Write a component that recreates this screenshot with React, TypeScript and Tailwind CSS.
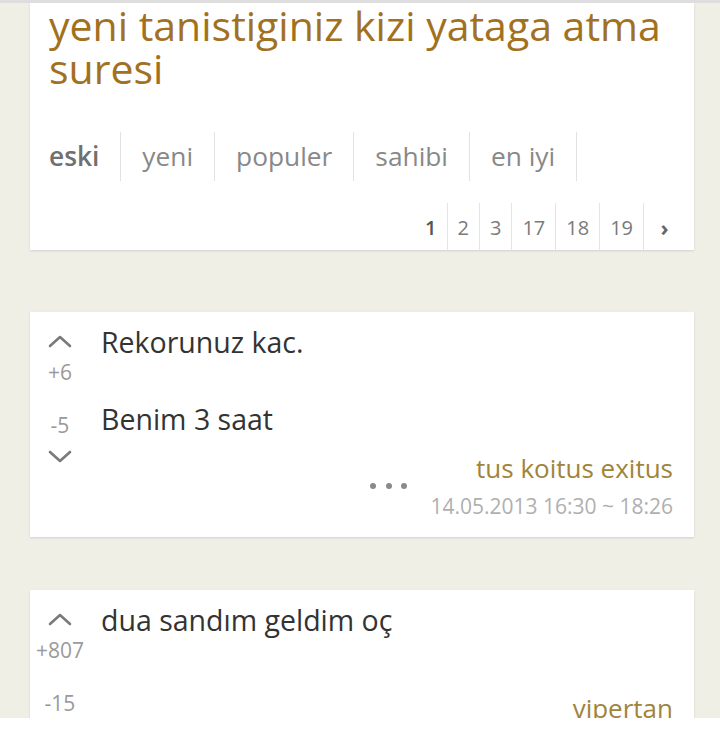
const tabs = ["eski", "yeni", "populer", "sahibi", "en iyi"];
const pages = ["1", "2", "3", "17", "18", "19"];

function Chevron({ down = false }: { down?: boolean }) {
  return (
    <svg width="24" height="13" viewBox="0 0 24 13" fill="none">
      <path
        d={down ? "M2 2 L12 11 L22 2" : "M2 11 L12 2 L22 11"}
        stroke="#7a7a7a"
        strokeWidth="2.6"
        strokeLinecap="round"
        strokeLinejoin="round"
      />
    </svg>
  );
}

function Entry({
  lines,
  up,
  down,
  author,
  date,
  className,
}: {
  lines: string[];
  up: string;
  down: string;
  author: string;
  date?: string;
  className?: string;
}) {
  return (
    <div className={`flex bg-white pb-[18px] pr-[21px] shadow-[0_1px_2px_rgba(0,0,0,0.12)] ${className ?? ""}`}>
      {/* votes */}
      <div className="flex w-[60px] shrink-0 flex-col items-center pt-[23px] text-[21px] leading-[24px] text-[#9a9a9a]">
        <Chevron />
        <span className="mt-[12px]">{up}</span>
        <span className="mt-[29px]">{down}</span>
        <span className="mt-[13px]">
          <Chevron down />
        </span>
      </div>
      <div className="ml-[11px] flex-1 pt-[11px]">
        <div className="min-h-[77px] text-[28.5px] leading-[38.5px] text-[#333]">
          {lines.map((l, i) => (
            <div key={i} className="min-h-[38.5px]">
              {l}
            </div>
          ))}
        </div>
        {/* author */}
        <div className="mt-[14.5px] flex items-center justify-end gap-[23px]">
          <div className="flex gap-[9.5px]">
            <span className="h-[6px] w-[6px] rounded-full bg-[#8a8a8a]" />
            <span className="h-[6px] w-[6px] rounded-full bg-[#8a8a8a]" />
            <span className="h-[6px] w-[6px] rounded-full bg-[#8a8a8a]" />
          </div>
          <div className="text-right">
            <div className="text-[26px] leading-[30px] text-[#a0843a]">{author}</div>
            {date && (
              <div className="mt-[10px] text-[21px] leading-[26px] text-[#b0b0b0]">{date}</div>
            )}
          </div>
        </div>
      </div>
    </div>
  );
}

export default function App() {
  return (
    <div className="h-[731px] bg-white" style={{ fontFamily: '"Open Sans", "Noto Sans", sans-serif' }}>
      <div className="h-[718px] overflow-hidden border-t-[3px] border-[#dedede] bg-[#efefe6] pl-[30px] pr-[26px]">
        {/* topic header */}
        <div className="bg-white pl-[19px] pr-[9px] shadow-[0_1px_2px_rgba(0,0,0,0.12)]">
          <h1 className="pr-[10px] pt-[1px] text-[41px] leading-[43px] text-[#a2711f]">
            yeni tanistiginiz kizi yataga atma suresi
          </h1>
          <div className="mt-[42px] flex">
            {tabs.map((t, i) => (
              <div
                key={t}
                className={`flex h-[49px] items-center border-r border-[#e2e2e2] text-[26.3px] ${
                  i === 0 ? "pr-[21px] font-semibold text-[#707070]" : "px-[21px] text-[#888]"
                }`}
              >
                {t}
              </div>
            ))}
          </div>
          <div className="mt-[22px] flex justify-end">
            {pages.map((p, i) => (
              <div
                key={p}
                className={`flex h-[47px] items-center px-[10px] pt-[3px] text-[20px] ${
                  i === 0 ? "font-semibold text-[#555]" : "border-l border-[#e4e4e4] text-[#7a7a7a]"
                }`}
              >
                {p}
              </div>
            ))}
            <div className="flex h-[47px] w-[42px] items-center justify-center border-l border-[#e4e4e4] pt-[1px] text-[22px] font-bold text-[#666]">
              ›
            </div>
          </div>
        </div>

        <Entry
          className="mt-[62px]"
          lines={["Rekorunuz kac.", "", "Benim 3 saat"]}
          up="+6"
          down="-5"
          author="tus koitus exitus"
          date="14.05.2013 16:30 ~ 18:26"
        />

        <Entry
          className="mt-[53px]"
          lines={["dua sandım geldim oç"]}
          up="+807"
          down="-15"
          author="vipertan"
          date="15.05.2013 00:12"
        />
      </div>
    </div>
  );
}
